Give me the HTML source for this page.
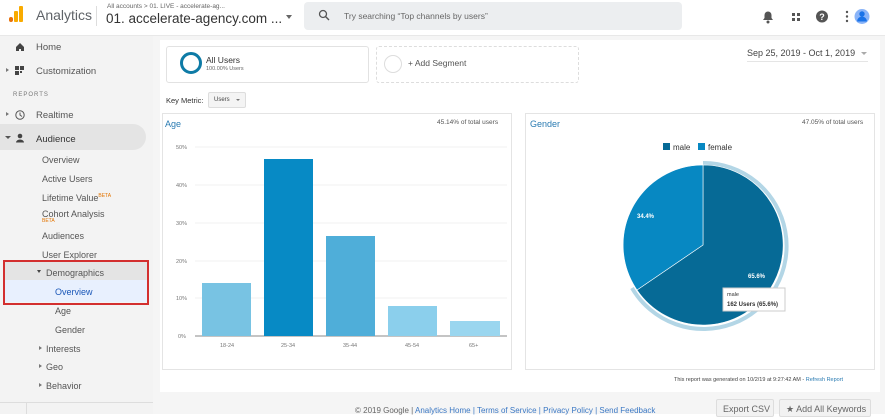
<!DOCTYPE html>
<html><head><meta charset="utf-8"><style>
*{margin:0;padding:0;box-sizing:border-box}
body{width:885px;height:414px;overflow:hidden;background:#fff;font-family:"Liberation Sans",Arial,sans-serif;position:relative;color:#333}
.a{position:absolute}
.nav{font-size:9.5px;color:#555}
</style></head><body>
<!-- header -->
<div class="a" style="left:0;top:0;width:885px;height:36px;background:#fff;border-bottom:1px solid #e8e8e8"></div>
<div class="a" style="left:9px;top:17px;width:4px;height:5px;background:#e8710a;border-radius:2px"></div>
<div class="a" style="left:14px;top:11px;width:4px;height:11px;background:#f9ab00;border-radius:1px"></div>
<div class="a" style="left:19px;top:6px;width:4px;height:16px;background:#f9ab00;border-radius:1px"></div>
<div class="a" style="left:36px;top:7px;font-size:14px;color:#5f6368">Analytics</div>
<div class="a" style="left:96px;top:6px;width:1px;height:20px;background:#ddd"></div>
<div class="a" style="left:107px;top:3px;font-size:6.5px;color:#666">All accounts &gt; 01. LIVE - accelerate-ag...</div>
<div class="a" style="left:106px;top:11px;font-size:13.5px;color:#333">01. accelerate-agency.com ...</div>
<div class="a" style="left:286px;top:15px;border:3px solid transparent;border-top:4px solid #666"></div>
<div class="a" style="left:304px;top:2px;width:378px;height:28px;background:#eceef0;border-radius:4px"></div>
<svg class="a" style="left:318px;top:9px" width="12" height="12" viewBox="0 0 12 12"><circle cx="5" cy="5" r="3.5" fill="none" stroke="#555" stroke-width="1.3"/><line x1="7.5" y1="7.5" x2="11" y2="11" stroke="#555" stroke-width="1.4"/></svg>
<div class="a" style="left:344px;top:11px;font-size:8.5px;color:#666">Try searching “Top channels by users”</div>
<svg class="a" style="left:760px;top:9px" width="110" height="16" viewBox="0 0 110 16">
<path d="M3 11h10l-1.5-2V6a3.5 3.5 0 0 0-7 0v3z" fill="#555"/><circle cx="8" cy="13" r="1.5" fill="#555"/>
<rect x="32" y="4" width="3" height="3" fill="#555"/><rect x="37" y="4" width="3" height="3" fill="#555"/><rect x="32" y="9" width="3" height="3" fill="#555"/><rect x="37" y="9" width="3" height="3" fill="#555"/>
<circle cx="62" cy="7.5" r="6" fill="#555"/><text x="62" y="11" font-size="9" font-weight="bold" fill="#fff" text-anchor="middle" font-family="Liberation Sans">?</text>
<circle cx="87" cy="3" r="1.2" fill="#555"/><circle cx="87" cy="7.5" r="1.2" fill="#555"/><circle cx="87" cy="12" r="1.2" fill="#555"/>
<circle cx="102" cy="7.5" r="7.5" fill="#8ab4f8"/><circle cx="102" cy="5" r="2.7" fill="#1a73e8"/><path d="M97 12.5a5 5 0 0 1 10 0" fill="#1a73e8"/></svg>
<!-- sidebar -->
<div class="a" style="left:0;top:36px;width:153px;height:378px;background:#f3f3f3"></div>
<div class="a" style="left:0;top:124px;width:146px;height:26px;background:#e4e4e4;border-radius:0 13px 13px 0"></div>
<svg class="a" style="left:15px;top:42px" width="10" height="10"><path d="M1 5L5 1l4 4v4H6V7H4v2H1z" fill="#444"/></svg>
<div class="a nav" style="left:36px;top:42px">Home</div>
<div class="a" style="left:6px;top:68px;border:2.5px solid transparent;border-left:3px solid #777"></div>
<svg class="a" style="left:15px;top:66px" width="10" height="10"><rect x="0" y="0" width="4" height="4" fill="#444"/><rect x="5" y="0" width="4" height="4" fill="#444"/><rect x="0" y="5" width="4" height="4" fill="#444"/><rect x="5" y="5" width="2" height="2" fill="#444"/></svg>
<div class="a nav" style="left:36px;top:66px">Customization</div>
<div class="a" style="left:13px;top:92px;font-size:6px;color:#777;letter-spacing:1px">REPORTS</div>
<div class="a" style="left:6px;top:112px;border:2.5px solid transparent;border-left:3px solid #777"></div>
<svg class="a" style="left:15px;top:110px" width="10" height="10"><circle cx="5" cy="5" r="4.2" fill="none" stroke="#555" stroke-width="1"/><path d="M5 2.5V5l2 1.5" stroke="#555" fill="none"/></svg>
<div class="a nav" style="left:36px;top:110px">Realtime</div>
<div class="a" style="left:5px;top:136px;border:3px solid transparent;border-top:3px solid #555"></div>
<svg class="a" style="left:15px;top:133px" width="10" height="10"><circle cx="5" cy="3" r="2.3" fill="#444"/><path d="M1 9.5a4 3 0 0 1 8 0z" fill="#444"/></svg>
<div class="a nav" style="left:36px;top:134px;color:#333">Audience</div>
<div class="a nav" style="left:42px;top:155px;font-size:9px">Overview</div>
<div class="a nav" style="left:42px;top:174px;font-size:9px">Active Users</div>
<div class="a nav" style="left:42px;top:193px;font-size:9px">Lifetime Value<sup style="font-size:5px;color:#e37400">BETA</sup></div>
<div class="a nav" style="left:42px;top:209px;font-size:9px">Cohort Analysis</div>
<div class="a" style="left:42px;top:218px;font-size:5px;color:#e37400">BETA</div>
<div class="a nav" style="left:42px;top:231px;font-size:9px">Audiences</div>
<div class="a nav" style="left:42px;top:250px;font-size:9px">User Explorer</div>
<div class="a" style="left:3px;top:260px;width:145px;height:20px;background:#e4e4e4"></div>
<div class="a" style="left:3px;top:280px;width:145px;height:22px;background:#e8f0fe"></div>
<div class="a" style="left:3px;top:260px;width:146px;height:45px;border:2.5px solid #d32f2f"></div>
<div class="a" style="left:37px;top:270px;border:2.5px solid transparent;border-top:3px solid #444"></div>
<div class="a nav" style="left:46px;top:268px;font-size:9px">Demographics</div>
<div class="a" style="left:55px;top:287px;font-size:9px;color:#1a57b8">Overview</div>
<div class="a nav" style="left:55px;top:306px;font-size:9px">Age</div>
<div class="a nav" style="left:55px;top:325px;font-size:9px">Gender</div>
<div class="a" style="left:39px;top:346px;border:2px solid transparent;border-left:3px solid #777"></div>
<div class="a nav" style="left:46px;top:344px;font-size:9px">Interests</div>
<div class="a" style="left:39px;top:364px;border:2px solid transparent;border-left:3px solid #777"></div>
<div class="a nav" style="left:46px;top:362px;font-size:9px">Geo</div>
<div class="a" style="left:39px;top:383px;border:2px solid transparent;border-left:3px solid #777"></div>
<div class="a nav" style="left:46px;top:381px;font-size:9px">Behavior</div>
<div class="a" style="left:0;top:402px;width:153px;height:1px;background:#ddd"></div>
<div class="a" style="left:26px;top:403px;width:1px;height:11px;background:#ddd"></div>
<!-- main -->
<div class="a" style="left:153px;top:36px;width:732px;height:378px;background:#f5f5f5"></div>
<div class="a" style="left:160px;top:40px;width:720px;height:352px;background:#fff"></div>
<div class="a" style="left:166px;top:46px;width:203px;height:37px;border:1px solid #e2e2e2;border-radius:3px"></div>
<div class="a" style="left:180px;top:52px;width:22px;height:22px;border:3px solid #0e7ba6;border-radius:50%"></div>
<div class="a" style="left:206px;top:55px;font-size:8.5px;color:#333">All Users</div>
<div class="a" style="left:206px;top:66px;font-size:5.5px;color:#666">100.00% Users</div>
<div class="a" style="left:376px;top:46px;width:203px;height:37px;border:1px dashed #ddd;border-radius:3px"></div>
<div class="a" style="left:384px;top:55px;width:18px;height:18px;border:1.5px solid #ddd;border-radius:50%"></div>
<div class="a" style="left:408px;top:58px;font-size:8.5px;color:#555">+ Add Segment</div>
<div class="a" style="left:747px;top:48px;font-size:9px;color:#444">Sep 25, 2019 - Oct 1, 2019</div>
<div class="a" style="left:861px;top:52px;border:3px solid transparent;border-top:3.5px solid #aaa"></div>
<div class="a" style="left:747px;top:61px;width:121px;height:1px;background:#e5e5e5"></div>
<div class="a" style="left:166px;top:96px;font-size:7.5px;color:#333">Key Metric:</div>
<div class="a" style="left:208px;top:92px;width:38px;height:16px;background:#f4f4f4;border:1px solid #ddd;border-radius:2px;font-size:6px;color:#444;padding:4px 0 0 5px">Users</div>
<div class="a" style="left:236px;top:99px;border:2px solid transparent;border-top:2.5px solid #777"></div>
<!-- age panel -->
<div class="a" style="left:162px;top:113px;width:350px;height:257px;border:1px solid #e4e4e4"></div>
<div class="a" style="left:165px;top:119px;font-size:9px;color:#2a7bb2">Age</div>
<div class="a" style="left:437px;top:119px;font-size:6.5px;color:#555">45.14% of total users</div>
<svg class="a" style="left:162px;top:113px" width="350" height="257">
<g stroke="#f2f2f2" stroke-width="1"><line x1="33" y1="34" x2="345" y2="34"/><line x1="33" y1="72" x2="345" y2="72"/><line x1="33" y1="110" x2="345" y2="110"/><line x1="33" y1="148" x2="345" y2="148"/><line x1="33" y1="185" x2="345" y2="185"/></g>
<line x1="33" y1="223" x2="345" y2="223" stroke="#888"/>
<g font-size="5.5" fill="#777" font-family="Liberation Sans"><text x="14" y="36">50%</text><text x="14" y="74">40%</text><text x="14" y="112">30%</text><text x="14" y="150">20%</text><text x="14" y="187">10%</text><text x="16" y="225">0%</text>
<text x="58" y="234">18-24</text><text x="119" y="234">25-34</text><text x="181" y="234">35-44</text><text x="243" y="234">45-54</text><text x="307" y="234">65+</text></g>
<rect x="40" y="170" width="49" height="53" fill="#78c3e3"/>
<rect x="102" y="46" width="49" height="177" fill="#078ac5"/>
<rect x="164" y="123" width="49" height="100" fill="#4faed9"/>
<rect x="226" y="193" width="49" height="30" fill="#8bcfec"/>
<rect x="288" y="208" width="50" height="15" fill="#9ad6ef"/>
</svg>
<!-- gender panel -->
<div class="a" style="left:525px;top:113px;width:350px;height:257px;border:1px solid #e4e4e4"></div>
<div class="a" style="left:530px;top:119px;font-size:9px;color:#2a7bb2">Gender</div>
<div class="a" style="left:802px;top:119px;font-size:6.5px;color:#555">47.05% of total users</div>
<svg class="a" style="left:520px;top:110px" width="365" height="260">
<path d="M183 53 A83 83 0 1 1 112 178" fill="none" stroke="#b3d6e6" stroke-width="4"/>
<path d="M183 135 L183 55 A80 80 0 1 1 117 180 Z" fill="#066a96" stroke="#fff" stroke-width="0.6"/>
<path d="M183 135 L117 180 A80 80 0 0 1 183 55 Z" fill="#0788c2" stroke="#fff" stroke-width="0.6"/>
<g font-family="Liberation Sans" font-size="6" font-weight="bold" fill="#fff"><text x="117" y="108">34.4%</text><text x="228" y="168">65.6%</text></g>
<rect x="143" y="33" width="7" height="7" fill="#066a96"/><text x="153" y="40" font-size="8" fill="#333" font-family="Liberation Sans">male</text>
<rect x="178" y="33" width="7" height="7" fill="#0788c2"/><text x="188" y="40" font-size="8" fill="#333" font-family="Liberation Sans">female</text>
<rect x="203" y="178" width="62" height="23" fill="#fff" stroke="#ccc"/>
<text x="207" y="186" font-size="5.5" fill="#333" font-family="Liberation Sans">male</text>
<text x="207" y="196" font-size="6" font-weight="bold" fill="#333" font-family="Liberation Sans">162 Users (65.6%)</text>
</svg>
<div class="a" style="left:674px;top:377px;font-size:5.5px;color:#444">This report was generated on 10/2/19 at 9:27:42 AM - <span style="color:#2a7bb2">Refresh Report</span></div>
<div class="a" style="left:355px;top:406px;font-size:8px;color:#666">© 2019 Google | <span style="color:#3b78c4">Analytics Home | Terms of Service | Privacy Policy | Send Feedback</span></div>
<div class="a" style="left:716px;top:399px;width:58px;height:18px;background:#f2f2f2;border:1px solid #ddd;border-radius:2px;font-size:9px;color:#666;padding:4px 0 0 6px">Export CSV</div>
<div class="a" style="left:779px;top:399px;width:92px;height:18px;background:#f2f2f2;border:1px solid #ddd;border-radius:2px;font-size:9px;color:#666;padding:4px 0 0 6px">★ Add All Keywords</div>
</body></html>
